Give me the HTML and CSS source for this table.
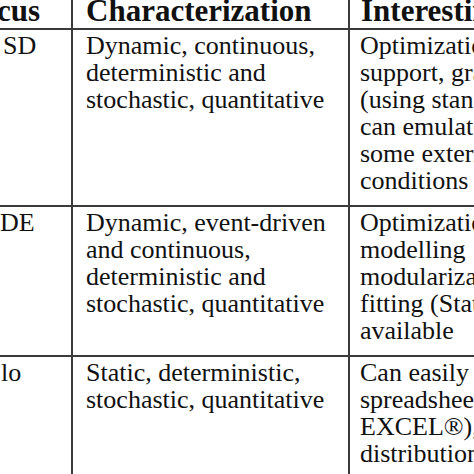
FILE: index.html
```html
<!DOCTYPE html>
<html lang="en">
<head>
<meta charset="utf-8">
<title>Simulation approaches</title>
<link rel="stylesheet" href="styles.css">
</head>
<body>
<div class="frame">
  <table class="grid">
    <colgroup>
      <col class="c1"><col class="c2"><col class="c3">
    </colgroup>
    <thead>
      <tr>
        <th class="k cut-a">cus</th>
        <th class="m">Characterization</th>
        <th class="n">Interesting features</th>
      </tr>
    </thead>
    <tbody>
      <tr class="r1">
        <td class="k cut-b">SD</td>
        <td class="m">Dynamic, continuous, deterministic and stochastic, quantitative</td>
        <td class="n">Optimization and sensitivity<br>support, graphical interface<br>(using standard icons),<br>can emulate discrete events,<br>some external influences and<br>conditions</td>
      </tr>
      <tr class="r2">
        <td class="k cut-c">DE</td>
        <td class="m">Dynamic, event-driven and continuous, deterministic and stochastic, quantitative</td>
        <td class="n">Optimization, hierarchical<br>modelling<br>modularization, distribution<br>fitting (Stat::Fit) tools<br>available</td>
      </tr>
      <tr class="r3">
        <td class="k cut-d">lo</td>
        <td class="m">Static, deterministic, stochastic, quantitative</td>
        <td class="n">Can easily be combined with<br>spreadsheet tools (e.g.<br>EXCEL®), many<br>distributions available</td>
      </tr>
    </tbody>
  </table>
</div>
</body>
</html>
```

FILE: styles.css
```css
html, body {
  margin: 0;
  padding: 0;
  background: #ffffff;
}

.frame {
  width: 474px;
  height: 474px;
  overflow: hidden;
}

.grid {
  border-collapse: collapse;
  table-layout: fixed;
  width: 660px;
  margin-top: -6px;
  font-family: "Liberation Serif", "Times New Roman", serif;
  color: #111111;
}

.c1 { width: 72px; }
.c2 { width: 277px; }
.c3 { width: 311px; }

th, td {
  text-align: left;
  vertical-align: top;
  border-bottom: 2px solid #3a3a3a;
}

th.k, td.k, th.m, td.m {
  border-right: 2px solid #3a3a3a;
}

th {
  font-size: 31px;
  font-weight: bold;
  line-height: 34px;
  padding: 0;
}

td {
  font-size: 26px;
  line-height: 27px;
  padding: 2px 0 11px 0;
}

.m { padding-left: 13px; padding-right: 6px; }
.n { padding-left: 10px; white-space: nowrap; }
th.n { padding-left: 11px; }

.cut-a { text-indent: -3px; }
.cut-b { padding-left: 3px; }
.cut-c { padding-left: 0; }
.cut-d { padding-left: 1px; }
```
